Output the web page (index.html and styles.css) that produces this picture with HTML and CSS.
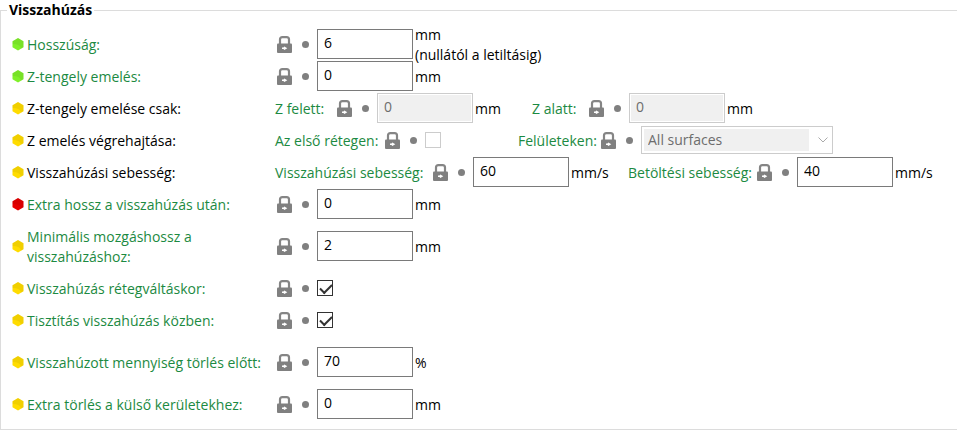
FILE: index.html
```html
<!DOCTYPE html>
<html lang="hu">
<head>
<meta charset="utf-8">
<title>Visszahúzás</title>
<link rel="stylesheet" href="styles.css">
</head>
<body>
<svg class="sprite" aria-hidden="true">
  <symbol id="lock" viewBox="0 0 15 17">
    <path d="M3 8V3.600Q3 1.200 5.400 1.200H9.600Q12 1.200 12 3.600V8" fill="none" stroke="#858585" stroke-width="2.200"/>
    <path d="M1 7.500H14Q15 7.500 15 8.500V16Q15 17 14 17H1Q0 17 0 16V8.500Q0 7.500 1 7.500Z" fill="#808080"/>
    <path d="M5 11.500H6.500L7.300 10.500L10.300 12.200L7.300 14L6.500 13H5Z" fill="#fff"/>
  </symbol>
  <symbol id="hex" viewBox="0 0 12 13">
    <path d="M6 0L11.500 3.200V9.300L6 12.500L0.500 9.300V3.200Z" fill="currentColor"/>
    <path d="M6 0L11.500 3.200V9.300L9 10.800Q8.500 6 0.500 6V3.200Z" fill="#000" fill-opacity="0.060"/>
  </symbol>
</svg>
<form>
<fieldset class="group">
  <legend>Visszahúzás</legend>

  <div class="row">
    <svg class="hex simple"><use href="#hex"/></svg>
    <label class="name" for="length">Hosszúság:</label>
    <div class="field"><svg class="lock"><use href="#lock"/></svg><i class="dot"></i><input class="num" type="text" id="length" value="6"><span class="unit">mm<br>(nullától a letiltásig)</span></div>
  </div>

  <div class="row">
    <svg class="hex simple"><use href="#hex"/></svg>
    <label class="name" for="lift">Z-tengely emelés:</label>
    <div class="field"><svg class="lock"><use href="#lock"/></svg><i class="dot"></i><input class="num" type="text" id="lift" value="0"><span class="unit">mm</span></div>
  </div>

  <div class="row">
    <svg class="hex advanced"><use href="#hex"/></svg>
    <span class="name plain">Z-tengely emelése csak:</span>
    <div class="options range">
      <label for="above">Z felett:</label>
      <div class="field"><svg class="lock"><use href="#lock"/></svg><i class="dot"></i><input class="num" type="text" id="above" value="0" disabled><span class="unit">mm</span></div>
      <label for="below">Z alatt:</label>
      <div class="field"><svg class="lock"><use href="#lock"/></svg><i class="dot"></i><input class="num" type="text" id="below" value="0" disabled><span class="unit">mm</span></div>
    </div>
  </div>

  <div class="row">
    <svg class="hex advanced"><use href="#hex"/></svg>
    <span class="name plain">Z emelés végrehajtása:</span>
    <div class="options surfaces">
      <label for="first">Az első rétegen:</label>
      <div class="field"><svg class="lock"><use href="#lock"/></svg><i class="dot"></i><input class="check" type="checkbox" id="first" disabled></div>
      <label for="surface">Felületeken:</label>
      <div class="field"><svg class="lock"><use href="#lock"/></svg><i class="dot"></i><span class="combo"><select id="surface" disabled><option>All surfaces</option></select><svg class="chevron" viewBox="0 0 10 6"><path d="M0.500 0.500L5 5L9.500 0.500" fill="none" stroke="#aaa"/></svg></span></div>
    </div>
  </div>

  <div class="row">
    <svg class="hex advanced"><use href="#hex"/></svg>
    <span class="name plain">Visszahúzási sebesség:</span>
    <div class="options speeds">
      <label for="retract">Visszahúzási sebesség:</label>
      <div class="field"><svg class="lock"><use href="#lock"/></svg><i class="dot"></i><input class="num" type="text" id="retract" value="60"><span class="unit">mm/s</span></div>
      <label for="deretract">Betöltési sebesség:</label>
      <div class="field"><svg class="lock"><use href="#lock"/></svg><i class="dot"></i><input class="num" type="text" id="deretract" value="40"><span class="unit">mm/s</span></div>
    </div>
  </div>

  <div class="row">
    <svg class="hex expert"><use href="#hex"/></svg>
    <label class="name" for="extra">Extra hossz a visszahúzás után:</label>
    <div class="field"><svg class="lock"><use href="#lock"/></svg><i class="dot"></i><input class="num" type="text" id="extra" value="0"><span class="unit">mm</span></div>
  </div>

  <div class="row tall">
    <svg class="hex advanced"><use href="#hex"/></svg>
    <label class="name" for="travel">Minimális mozgáshossz a visszahúzáshoz:</label>
    <div class="field"><svg class="lock"><use href="#lock"/></svg><i class="dot"></i><input class="num" type="text" id="travel" value="2"><span class="unit">mm</span></div>
  </div>

  <div class="row">
    <svg class="hex advanced"><use href="#hex"/></svg>
    <label class="name" for="layer">Visszahúzás rétegváltáskor:</label>
    <div class="field"><svg class="lock"><use href="#lock"/></svg><i class="dot"></i><input class="check" type="checkbox" id="layer" checked></div>
  </div>

  <div class="row">
    <svg class="hex advanced"><use href="#hex"/></svg>
    <label class="name" for="wipe">Tisztítás visszahúzás közben:</label>
    <div class="field"><svg class="lock"><use href="#lock"/></svg><i class="dot"></i><input class="check" type="checkbox" id="wipe" checked></div>
  </div>

  <div class="row tall">
    <svg class="hex advanced"><use href="#hex"/></svg>
    <label class="name" for="before">Visszahúzott mennyiség törlés előtt:</label>
    <div class="field"><svg class="lock"><use href="#lock"/></svg><i class="dot"></i><input class="num" type="text" id="before" value="70"><span class="unit">%</span></div>
  </div>

  <div class="row">
    <svg class="hex advanced"><use href="#hex"/></svg>
    <label class="name" for="perimeter">Extra törlés a külső kerületekhez:</label>
    <div class="field"><svg class="lock"><use href="#lock"/></svg><i class="dot"></i><input class="num" type="text" id="perimeter" value="0"><span class="unit">mm</span></div>
  </div>
</fieldset>
</form>
</body>
</html>
```
FILE: styles.css
```css
* { box-sizing: border-box; }

body {
  margin: 0;
  background: #fff;
  color: #000;
  font: 14px/20px "Segoe UI", "Open Sans", "Noto Sans", sans-serif;
}

.sprite { display: none; }

.group {
  margin: 0;
  min-width: 0;
  padding: 8px 0 9px 11px;
  border: 1px solid #dcdcdc;
  border-right: 0;
}

legend {
  margin-left: -5px;
  padding: 0 2px;
  font-weight: 700;
}

.row {
  display: grid;
  grid-template-columns: 12px 245px 1fr;
  column-gap: 3px;
  align-items: center;
  height: 32px;
}

.tall { height: 52px; }

label { color: #1c8a42; }

label, .name, .unit { padding-top: 2px; }

.hex { width: 12px; height: 13px; }
.simple { color: #80f02a; }
.advanced { color: #ffdc00; }
.expert { color: #e60000; }

.field {
  display: flex;
  align-items: center;
  height: 32px;
  padding-left: 2px;
  white-space: nowrap;
}

.lock { flex: none; width: 15px; height: 17px; }

.dot {
  flex: none;
  width: 7px;
  height: 7px;
  margin: 0 8px 0 10px;
  border-radius: 50%;
  background: #808080;
}

.num {
  flex: none;
  width: 96px;
  height: 30px;
  margin: 0;
  padding: 0 6px 3px;
  border: 1px solid #7a7a7a;
  border-radius: 0;
  background: #fff;
  color: #000;
  font: inherit;
}

.num:disabled {
  border: 1px solid #ccc;
  box-shadow: inset 0 0 0 1px #fff;
  background: #f0f0f0;
  color: #6d6d6d;
}

.unit { margin-left: 2px; }

.check {
  appearance: none;
  flex: none;
  width: 16px;
  height: 16px;
  margin: 0;
  border: 1px solid #333;
  background: #fff;
}

.check:checked::before {
  content: "";
  display: block;
  width: 10px;
  height: 5px;
  margin: 3px 2px;
  border: solid #333;
  border-width: 0 0 2px 2px;
  transform: rotate(-45deg);
}

.check:disabled { border-color: #ccc; }

.options {
  display: grid;
  align-items: center;
  white-space: nowrap;
}

.range { grid-template-columns: 60px 197px 55px 1fr; }
.surfaces { grid-template-columns: 108px 135px 81px 1fr; }
.speeds { grid-template-columns: 156px 197px 127px 1fr; }

.combo {
  position: relative;
  display: flex;
  width: 192px;
}

.combo select {
  appearance: none;
  width: 100%;
  height: 28px;
  margin: 0;
  padding: 0 24px 0 6px;
  border: 1px solid #ccc;
  border-radius: 0;
  background: linear-gradient(#f0f0f0, #f0f0f0) 2px 2px / 165px 22px no-repeat #fff;
  color: #6d6d6d;
  font: inherit;
  opacity: 1;
}

.chevron {
  position: absolute;
  right: 5px;
  top: 11px;
  width: 10px;
  height: 6px;
}
```
